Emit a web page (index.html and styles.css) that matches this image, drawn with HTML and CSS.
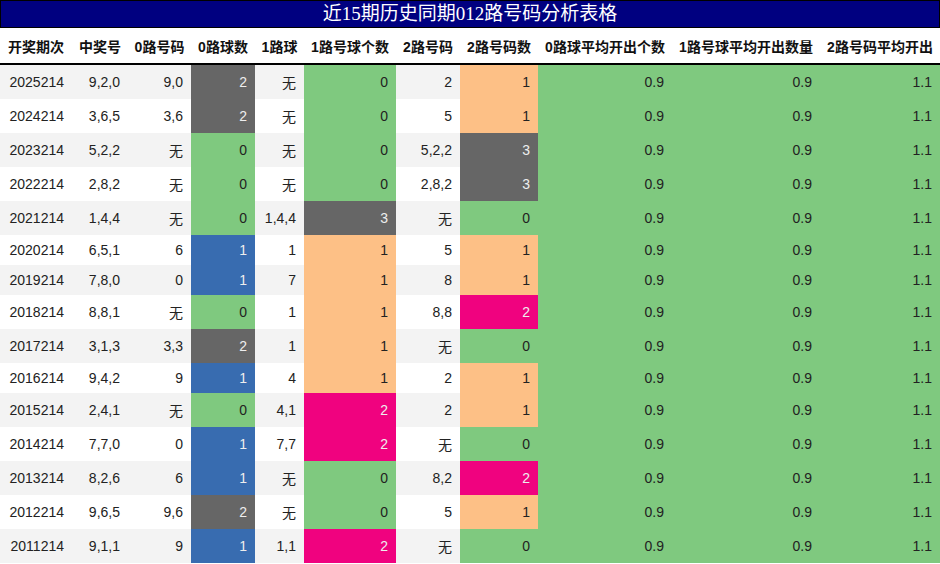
FILE: index.html
```html
<!DOCTYPE html>
<html lang="zh">
<head>
<meta charset="utf-8">
<title>近15期历史同期012路号码分析表格</title>
<link rel="stylesheet" href="styles.css">
</head>
<body>
<div class="title">近15期历史同期012路号码分析表格</div>
<table class="grid">
<colgroup>
<col class="w72"><col class="w56"><col class="w63"><col class="w64"><col class="w49"><col class="w92"><col class="w64"><col class="w78"><col class="w134"><col class="w148"><col class="w120">
</colgroup>
<thead>
<tr><th>开奖期次</th><th>中奖号</th><th>0路号码</th><th>0路球数</th><th>1路球</th><th>1路号球个数</th><th>2路号码</th><th>2路号码数</th><th>0路球平均开出个数</th><th>1路号球平均开出数量</th><th>2路号码平均开出</th></tr>
</thead>
<tbody>
<tr><td>2025214</td><td>9,2,0</td><td>9,0</td><td class="c-gray">2</td><td>无</td><td class="c-green">0</td><td>2</td><td class="c-orange">1</td><td class="c-green">0.9</td><td class="c-green">0.9</td><td class="c-green">1.1</td></tr>
<tr><td>2024214</td><td>3,6,5</td><td>3,6</td><td class="c-gray">2</td><td>无</td><td class="c-green">0</td><td>5</td><td class="c-orange">1</td><td class="c-green">0.9</td><td class="c-green">0.9</td><td class="c-green">1.1</td></tr>
<tr><td>2023214</td><td>5,2,2</td><td>无</td><td class="c-green">0</td><td>无</td><td class="c-green">0</td><td>5,2,2</td><td class="c-gray">3</td><td class="c-green">0.9</td><td class="c-green">0.9</td><td class="c-green">1.1</td></tr>
<tr><td>2022214</td><td>2,8,2</td><td>无</td><td class="c-green">0</td><td>无</td><td class="c-green">0</td><td>2,8,2</td><td class="c-gray">3</td><td class="c-green">0.9</td><td class="c-green">0.9</td><td class="c-green">1.1</td></tr>
<tr><td>2021214</td><td>1,4,4</td><td>无</td><td class="c-green">0</td><td>1,4,4</td><td class="c-gray">3</td><td>无</td><td class="c-green">0</td><td class="c-green">0.9</td><td class="c-green">0.9</td><td class="c-green">1.1</td></tr>
<tr><td>2020214</td><td>6,5,1</td><td>6</td><td class="c-blue">1</td><td>1</td><td class="c-orange">1</td><td>5</td><td class="c-orange">1</td><td class="c-green">0.9</td><td class="c-green">0.9</td><td class="c-green">1.1</td></tr>
<tr><td>2019214</td><td>7,8,0</td><td>0</td><td class="c-blue">1</td><td>7</td><td class="c-orange">1</td><td>8</td><td class="c-orange">1</td><td class="c-green">0.9</td><td class="c-green">0.9</td><td class="c-green">1.1</td></tr>
<tr><td>2018214</td><td>8,8,1</td><td>无</td><td class="c-green">0</td><td>1</td><td class="c-orange">1</td><td>8,8</td><td class="c-magenta">2</td><td class="c-green">0.9</td><td class="c-green">0.9</td><td class="c-green">1.1</td></tr>
<tr><td>2017214</td><td>3,1,3</td><td>3,3</td><td class="c-gray">2</td><td>1</td><td class="c-orange">1</td><td>无</td><td class="c-green">0</td><td class="c-green">0.9</td><td class="c-green">0.9</td><td class="c-green">1.1</td></tr>
<tr><td>2016214</td><td>9,4,2</td><td>9</td><td class="c-blue">1</td><td>4</td><td class="c-orange">1</td><td>2</td><td class="c-orange">1</td><td class="c-green">0.9</td><td class="c-green">0.9</td><td class="c-green">1.1</td></tr>
<tr><td>2015214</td><td>2,4,1</td><td>无</td><td class="c-green">0</td><td>4,1</td><td class="c-magenta">2</td><td>2</td><td class="c-orange">1</td><td class="c-green">0.9</td><td class="c-green">0.9</td><td class="c-green">1.1</td></tr>
<tr><td>2014214</td><td>7,7,0</td><td>0</td><td class="c-blue">1</td><td>7,7</td><td class="c-magenta">2</td><td>无</td><td class="c-green">0</td><td class="c-green">0.9</td><td class="c-green">0.9</td><td class="c-green">1.1</td></tr>
<tr><td>2013214</td><td>8,2,6</td><td>6</td><td class="c-blue">1</td><td>无</td><td class="c-green">0</td><td>8,2</td><td class="c-magenta">2</td><td class="c-green">0.9</td><td class="c-green">0.9</td><td class="c-green">1.1</td></tr>
<tr><td>2012214</td><td>9,6,5</td><td>9,6</td><td class="c-gray">2</td><td>无</td><td class="c-green">0</td><td>5</td><td class="c-orange">1</td><td class="c-green">0.9</td><td class="c-green">0.9</td><td class="c-green">1.1</td></tr>
<tr><td>2011214</td><td>9,1,1</td><td>9</td><td class="c-blue">1</td><td>1,1</td><td class="c-magenta">2</td><td>无</td><td class="c-green">0</td><td class="c-green">0.9</td><td class="c-green">0.9</td><td class="c-green">1.1</td></tr>
</tbody>
</table>
</body>
</html>
```
FILE: styles.css
```css
html, body {
  margin: 0;
  padding: 0;
  background: #ffffff;
}
body {
  width: 940px;
  font-family: "Liberation Sans", "Noto Sans CJK SC", sans-serif;
  font-size: 14px;
  color: #222222;
}
.title {
  box-sizing: border-box;
  height: 28px;
  line-height: 26px;
  border: 1px solid #000000;
  background: #000080;
  color: #ffffff;
  text-align: center;
  font-family: "Liberation Serif", "Noto Sans CJK SC", serif;
  font-size: 19px;
}
.grid {
  width: 940px;
  table-layout: fixed;
  border-collapse: collapse;
  border-spacing: 0;
}
.w72 { width: 72px; }
.w56 { width: 56px; }
.w63 { width: 63px; }
.w64 { width: 64px; }
.w49 { width: 49px; }
.w92 { width: 92px; }
.w78 { width: 78px; }
.w134 { width: 134px; }
.w148 { width: 148px; }
.w120 { width: 120px; }
.grid th {
  padding: 8px 0 7px;
  font-weight: bold;
  text-align: center;
  white-space: nowrap;
  color: #111111;
  border-bottom: 2px solid #000000;
}
.grid td {
  padding: 7px 8px;
  text-align: right;
  white-space: nowrap;
}
.grid tbody tr:nth-child(odd) {
  background: #f3f3f3;
}
.grid tbody tr:nth-child(even) {
  background: #ffffff;
}
.grid td.c-gray {
  background: #666666;
  color: #eeeeee;
}
.grid td.c-green {
  background: #7fc97f;
  color: #222222;
}
.grid td.c-orange {
  background: #fdc086;
  color: #222222;
}
.grid td.c-blue {
  background: #386cb0;
  color: #eeeeee;
}
.grid td.c-magenta {
  background: #f0027f;
  color: #eeeeee;
}
```
